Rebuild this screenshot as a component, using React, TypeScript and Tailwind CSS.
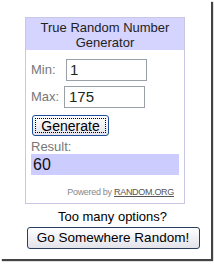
import React from 'react';

export default function App() {
  return (
    <div className="w-[214px] h-[265px] bg-white" style={{ fontFamily: '"Liberation Sans", Arial, sans-serif' }}>
      <div className="w-[211px] h-[259px] bg-white shadow-[2px_2px_1px_#444] pt-[17px]">
        <div className="ml-[25px] w-[160px] border border-[#c8c8e4]">
          <div className="h-[32px] bg-[#d4d4ff] text-center text-[13px] leading-[15px] pt-[2px] text-[#222]">
            True Random Number
            <br />
            Generator
          </div>
          <div className="px-[5px] pt-[9px] pb-[6px]">
            <div className="flex items-center h-[22px]">
              <span className="w-[35px] text-[13px] text-[#777]">Min:</span>
              <input
                className="w-[81px] h-[22px] border border-[#9aa0a8] px-[3px] text-[15px] text-[#1a2a1a] outline-none"
                defaultValue="1"
              />
            </div>
            <div className="flex items-center h-[22px] mt-[5px]">
              <span className="w-[33px] text-[13px] text-[#777]">Max:</span>
              <input
                className="w-[81px] h-[22px] border border-[#9aa0a8] px-[4px] text-[15px] text-[#1a2a1a] outline-none"
                defaultValue="175"
              />
            </div>
            <button className="mt-[7px] ml-[1px] w-[77px] h-[21px] rounded-[3px] border border-[#1f4f9c] bg-gradient-to-b from-white to-[#e4e4ea] p-[2px]">
              <span className="block h-full border border-dotted border-black text-[14px] leading-[14px] text-black">
                Generate
              </span>
            </button>
            <div className="text-[13px] leading-[15px] text-[#777] mt-[1px]">Result:</div>
            <div className="h-[21px] bg-[#ccccff] text-[16px] leading-[21px] pl-[2px] text-[#111]">60</div>
            <div className="text-right text-[9px] leading-[10px] text-[#888] mt-[12px] pr-[5px] tracking-[-0.3px]">
              Powered by <span className="underline text-[#555]">RANDOM.ORG</span>
            </div>
          </div>
        </div>
        <div className="ml-[25px] w-[175px] text-center">
          <div className="text-[13px] leading-[15px] text-black mt-[5px]">Too many options?</div>
          <button className="mt-[3px] ml-[1px] w-[173px] h-[22px] rounded-[3px] border border-[#2a3f5c] bg-gradient-to-b from-white to-[#e2e2ea] text-[13.5px] text-black leading-[18px]">
            Go Somewhere Random!
          </button>
        </div>
      </div>
    </div>
  );
}
